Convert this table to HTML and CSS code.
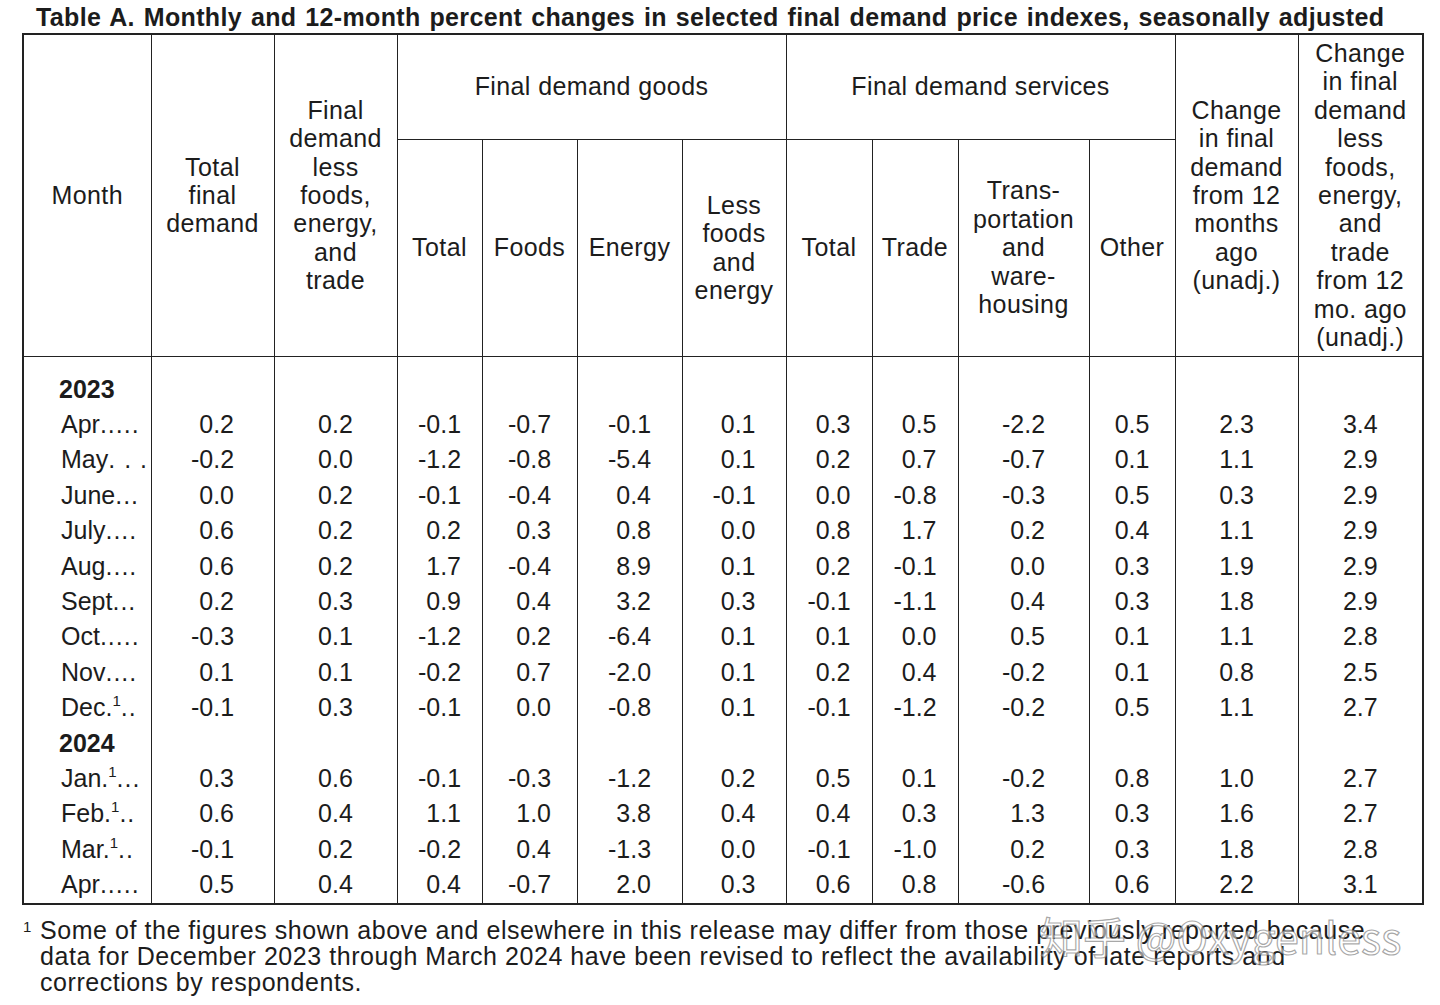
FILE: index.html
```html
<!DOCTYPE html>
<html lang="en">
<head>
<meta charset="utf-8">
<title>Table A</title>
<link rel="stylesheet" href="styles.css">
</head>
<body>
<div class="page">
  <h1 class="title">Table A. Monthly and 12-month percent changes in selected final demand price indexes, seasonally adjusted</h1>
  <table class="ppi">
    <colgroup>
      <col class="c0"><col class="c1"><col class="c2"><col class="c3"><col class="c4"><col class="c5"><col class="c6"><col class="c7"><col class="c8"><col class="c9"><col class="c10"><col class="c11"><col class="c12">
    </colgroup>
    <thead>
      <tr class="h1">
        <th rowspan="2">Month</th>
        <th rowspan="2">Total<br>final<br>demand</th>
        <th rowspan="2">Final<br>demand<br>less<br>foods,<br>energy,<br>and<br>trade</th>
        <th colspan="4" class="grp">Final demand goods</th>
        <th colspan="4" class="grp">Final demand services</th>
        <th rowspan="2">Change<br>in final<br>demand<br>from 12<br>months<br>ago<br>(unadj.)</th>
        <th rowspan="2">Change<br>in final<br>demand<br>less<br>foods,<br>energy,<br>and<br>trade<br>from 12<br>mo. ago<br>(unadj.)</th>
      </tr>
      <tr class="h2">
        <th>Total</th>
        <th>Foods</th>
        <th>Energy</th>
        <th>Less<br>foods<br>and<br>energy</th>
        <th>Total</th>
        <th>Trade</th>
        <th>Trans-<br>portation<br>and<br>ware-<br>housing</th>
        <th>Other</th>
      </tr>
    </thead>
    <tbody>
      <tr class="first yr"><td class="mo"><b>2023</b></td><td></td><td></td><td></td><td class="in"></td><td class="in"></td><td class="in"></td><td></td><td class="in"></td><td class="in"></td><td class="in"></td><td></td><td></td></tr>
      <tr><td class="mo">Apr<i>.....</i></td><td class="n"><span>0.2</span></td><td><span>0.2</span></td><td class="n"><span>-0.1</span></td><td class="n in"><span>-0.7</span></td><td class="n in"><span>-0.1</span></td><td class="n in"><span>0.1</span></td><td class="n"><span>0.3</span></td><td class="n in"><span>0.5</span></td><td class="n in"><span>-2.2</span></td><td class="in"><span>0.5</span></td><td><span>2.3</span></td><td><span>3.4</span></td></tr>
      <tr><td class="mo">May<i>. . .</i></td><td class="n"><span>-0.2</span></td><td><span>0.0</span></td><td class="n"><span>-1.2</span></td><td class="n in"><span>-0.8</span></td><td class="n in"><span>-5.4</span></td><td class="n in"><span>0.1</span></td><td class="n"><span>0.2</span></td><td class="n in"><span>0.7</span></td><td class="n in"><span>-0.7</span></td><td class="in"><span>0.1</span></td><td><span>1.1</span></td><td><span>2.9</span></td></tr>
      <tr><td class="mo">June<i>...</i></td><td class="n"><span>0.0</span></td><td><span>0.2</span></td><td class="n"><span>-0.1</span></td><td class="n in"><span>-0.4</span></td><td class="n in"><span>0.4</span></td><td class="n in"><span>-0.1</span></td><td class="n"><span>0.0</span></td><td class="n in"><span>-0.8</span></td><td class="n in"><span>-0.3</span></td><td class="in"><span>0.5</span></td><td><span>0.3</span></td><td><span>2.9</span></td></tr>
      <tr><td class="mo">July<i>....</i></td><td class="n"><span>0.6</span></td><td><span>0.2</span></td><td class="n"><span>0.2</span></td><td class="n in"><span>0.3</span></td><td class="n in"><span>0.8</span></td><td class="n in"><span>0.0</span></td><td class="n"><span>0.8</span></td><td class="n in"><span>1.7</span></td><td class="n in"><span>0.2</span></td><td class="in"><span>0.4</span></td><td><span>1.1</span></td><td><span>2.9</span></td></tr>
      <tr><td class="mo">Aug<i>....</i></td><td class="n"><span>0.6</span></td><td><span>0.2</span></td><td class="n"><span>1.7</span></td><td class="n in"><span>-0.4</span></td><td class="n in"><span>8.9</span></td><td class="n in"><span>0.1</span></td><td class="n"><span>0.2</span></td><td class="n in"><span>-0.1</span></td><td class="n in"><span>0.0</span></td><td class="in"><span>0.3</span></td><td><span>1.9</span></td><td><span>2.9</span></td></tr>
      <tr><td class="mo">Sept<i>...</i></td><td class="n"><span>0.2</span></td><td><span>0.3</span></td><td class="n"><span>0.9</span></td><td class="n in"><span>0.4</span></td><td class="n in"><span>3.2</span></td><td class="n in"><span>0.3</span></td><td class="n"><span>-0.1</span></td><td class="n in"><span>-1.1</span></td><td class="n in"><span>0.4</span></td><td class="in"><span>0.3</span></td><td><span>1.8</span></td><td><span>2.9</span></td></tr>
      <tr><td class="mo">Oct<i>.....</i></td><td class="n"><span>-0.3</span></td><td><span>0.1</span></td><td class="n"><span>-1.2</span></td><td class="n in"><span>0.2</span></td><td class="n in"><span>-6.4</span></td><td class="n in"><span>0.1</span></td><td class="n"><span>0.1</span></td><td class="n in"><span>0.0</span></td><td class="n in"><span>0.5</span></td><td class="in"><span>0.1</span></td><td><span>1.1</span></td><td><span>2.8</span></td></tr>
      <tr><td class="mo">Nov<i>....</i></td><td class="n"><span>0.1</span></td><td><span>0.1</span></td><td class="n"><span>-0.2</span></td><td class="n in"><span>0.7</span></td><td class="n in"><span>-2.0</span></td><td class="n in"><span>0.1</span></td><td class="n"><span>0.2</span></td><td class="n in"><span>0.4</span></td><td class="n in"><span>-0.2</span></td><td class="in"><span>0.1</span></td><td><span>0.8</span></td><td><span>2.5</span></td></tr>
      <tr><td class="mo">Dec.<sup>1</sup><i>..</i></td><td class="n"><span>-0.1</span></td><td><span>0.3</span></td><td class="n"><span>-0.1</span></td><td class="n in"><span>0.0</span></td><td class="n in"><span>-0.8</span></td><td class="n in"><span>0.1</span></td><td class="n"><span>-0.1</span></td><td class="n in"><span>-1.2</span></td><td class="n in"><span>-0.2</span></td><td class="in"><span>0.5</span></td><td><span>1.1</span></td><td><span>2.7</span></td></tr>
      <tr class="yr"><td class="mo"><b>2024</b></td><td></td><td></td><td></td><td class="in"></td><td class="in"></td><td class="in"></td><td></td><td class="in"></td><td class="in"></td><td class="in"></td><td></td><td></td></tr>
      <tr><td class="mo">Jan.<sup>1</sup><i>...</i></td><td class="n"><span>0.3</span></td><td><span>0.6</span></td><td class="n"><span>-0.1</span></td><td class="n in"><span>-0.3</span></td><td class="n in"><span>-1.2</span></td><td class="n in"><span>0.2</span></td><td class="n"><span>0.5</span></td><td class="n in"><span>0.1</span></td><td class="n in"><span>-0.2</span></td><td class="in"><span>0.8</span></td><td><span>1.0</span></td><td><span>2.7</span></td></tr>
      <tr><td class="mo">Feb.<sup>1</sup><i>..</i></td><td class="n"><span>0.6</span></td><td><span>0.4</span></td><td class="n"><span>1.1</span></td><td class="n in"><span>1.0</span></td><td class="n in"><span>3.8</span></td><td class="n in"><span>0.4</span></td><td class="n"><span>0.4</span></td><td class="n in"><span>0.3</span></td><td class="n in"><span>1.3</span></td><td class="in"><span>0.3</span></td><td><span>1.6</span></td><td><span>2.7</span></td></tr>
      <tr><td class="mo">Mar.<sup>1</sup><i>..</i></td><td class="n"><span>-0.1</span></td><td><span>0.2</span></td><td class="n"><span>-0.2</span></td><td class="n in"><span>0.4</span></td><td class="n in"><span>-1.3</span></td><td class="n in"><span>0.0</span></td><td class="n"><span>-0.1</span></td><td class="n in"><span>-1.0</span></td><td class="n in"><span>0.2</span></td><td class="in"><span>0.3</span></td><td><span>1.8</span></td><td><span>2.8</span></td></tr>
      <tr class="last"><td class="mo">Apr<i>.....</i></td><td class="n"><span>0.5</span></td><td><span>0.4</span></td><td class="n"><span>0.4</span></td><td class="n in"><span>-0.7</span></td><td class="n in"><span>2.0</span></td><td class="n in"><span>0.3</span></td><td class="n"><span>0.6</span></td><td class="n in"><span>0.8</span></td><td class="n in"><span>-0.6</span></td><td class="in"><span>0.6</span></td><td><span>2.2</span></td><td><span>3.1</span></td></tr>
    </tbody>
  </table>
  <div class="note">
    <span class="mark">1</span>
    <p>Some of the figures shown above and elsewhere in this release may differ from those previously reported because<br>data for December 2023 through March 2024 have been revised to reflect the availability of late reports and<br>corrections by respondents.</p>
  </div>
  <div class="wm">知乎 @Oxygenless</div>
</div>
</body>
</html>
```

FILE: styles.css
```css
html, body {
  margin: 0;
  padding: 0;
  background: #ffffff;
}

.page {
  position: relative;
  width: 1440px;
  height: 1005px;
  overflow: hidden;
  font-family: "Liberation Sans", Arial, "Noto Sans CJK SC", sans-serif;
  color: #1c1c1c;
}

.title {
  margin: 0 0 0 36px;
  padding-top: 2px;
  height: 31px;
  font-size: 25px;
  line-height: 31px;
  font-weight: bold;
  letter-spacing: 0.35px;
  word-spacing: 1.6px;
  white-space: nowrap;
}

.ppi {
  margin-left: 22px;
  width: 1400px;
  table-layout: fixed;
  border-collapse: collapse;
  border: 2.5px solid #222;
  font-size: 25px;
}

.c0 { width: 128px; }
.c1 { width: 123px; }
.c2 { width: 123px; }
.c3 { width: 85px; }
.c4 { width: 95px; }
.c5 { width: 105px; }
.c6 { width: 104px; }
.c7 { width: 86px; }
.c8 { width: 86px; }
.c9 { width: 131px; }
.c10 { width: 86px; }
.c11 { width: 123px; }
.c12 { width: 125px; }

th {
  font-weight: normal;
  line-height: 28.4px;
  letter-spacing: 0.4px;
  padding: 0;
  border: 1.5px solid #222;
  vertical-align: middle;
  text-align: center;
}

.h1 { height: 105px; }
.h2 { height: 217px; }

.grp { padding-bottom: 2px; }

td {
  padding: 0;
  height: 35.4px;
  line-height: 35.4px;
  text-align: center;
  border-left: 1.5px solid #222;
  border-right: 1.5px solid #222;
  white-space: nowrap;
}

td.in {
  border-left: none;
}

td span {
  display: inline-block;
  text-align: right;
}

td.n span {
  min-width: 1.723em;
}

tr.first td {
  padding-top: 15px;
}

td.mo {
  text-align: left;
  padding-left: 37px;
}

td.mo b {
  margin-left: -2px;
}

td.mo i {
  font-style: normal;
  letter-spacing: 1px;
}

td.mo sup {
  font-size: 15px;
  line-height: 0;
  vertical-align: 10px;
}

.note {
  display: flex;
  margin: 12px 0 0 23px;
  font-size: 25px;
  line-height: 26px;
  letter-spacing: 0.55px;
  white-space: nowrap;
}

.note .mark {
  flex: none;
  width: 17px;
  font-size: 15px;
  line-height: 20px;
  letter-spacing: 0;
}

.note p {
  margin: 0;
}

.wm {
  position: absolute;
  left: 1040px;
  top: 910px;
  font-family: "Noto Sans CJK SC", "Liberation Sans", sans-serif;
  font-size: 43px;
  line-height: 50px;
  color: rgba(255, 255, 255, 0.55);
  -webkit-text-stroke: 1.2px rgba(110, 110, 110, 0.6);
  white-space: nowrap;
}
```
